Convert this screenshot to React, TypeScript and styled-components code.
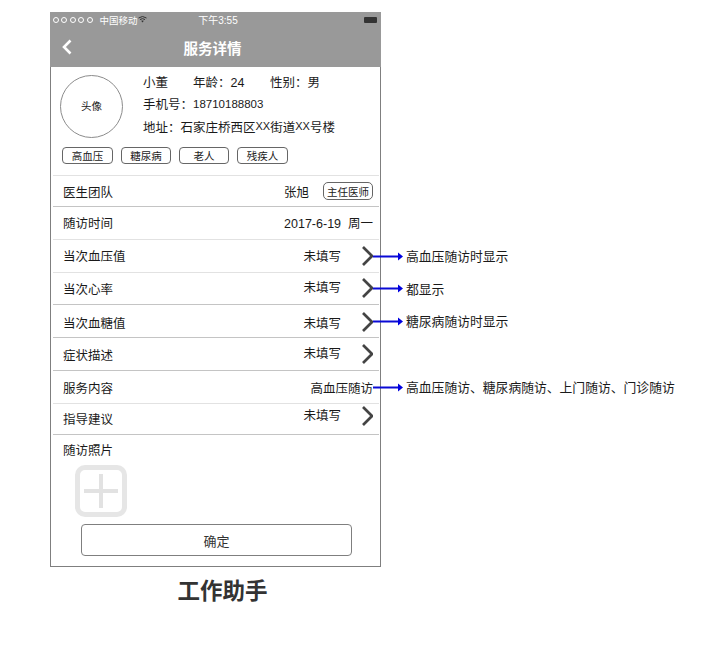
import styled, { createGlobalStyle } from 'styled-components';

const GlobalStyle = createGlobalStyle`
    body {
        margin: 0;
        background: #fff;
        font-family: "Liberation Sans", "Noto Sans CJK SC", sans-serif;
        color: #1a1a1a;
    }
`;

const Page = styled.div`
    width: 704px;
    height: 647px;
    padding: 12px 0 0 50px;
    box-sizing: border-box;
    overflow: hidden;
`;

const Phone = styled.div`
    width: 331px;
    height: 555px;
    box-sizing: border-box;
    border: 1px solid #7f7f7f;
    border-top: 0;
    display: flex;
    flex-direction: column;
`;

const Header = styled.div`
    background: #999;
    height: 55px;
    margin: 0 -1px;
    flex: none;
    color: #fff;
`;

const StatusBar = styled.div`
    height: 15px;
    padding: 0 4px 0 3px;
    display: grid;
    grid-template-columns: 1fr auto 1fr;
    align-items: center;
    font-size: 10px;
`;

const StatusLeft = styled.div`
    display: flex;
    align-items: center;
`;

const Dots = styled.div`
    display: flex;
    gap: 2.4px;
    margin-right: 7px;
`;

const Dot = styled.span`
    width: 4px;
    height: 4px;
    border: 0.8px solid #fff;
    border-radius: 50%;
`;

const Carrier = styled.span`
    color: #fff;
    font-size: 9.5px;
    white-space: nowrap;
`;

const Clock = styled.span`
    margin-left: 6px;
`;

const Battery = styled.div`
    justify-self: end;
    width: 13px;
    height: 6px;
    background: #333;
    border-radius: 1px;
`;

const NavBar = styled.div`
    height: 40px;
    padding: 0 11px;
    display: flex;
    align-items: center;
`;

const NavTitle = styled.div`
    flex: 1;
    padding-right: 18px;
    text-align: center;
    font-size: 14.5px;
    font-weight: 700;
`;

const Profile = styled.div`
    height: 108px;
    flex: none;
    box-sizing: border-box;
    padding: 8px 0 0 9px;
`;

const ProfileTop = styled.div`
    display: flex;
    gap: 20px;
`;

const Avatar = styled.div`
    width: 63px;
    height: 63px;
    padding-bottom: 2px;
    box-sizing: border-box;
    border: 1px solid #8c8c8c;
    border-radius: 50%;
    display: flex;
    align-items: center;
    justify-content: center;
    font-size: 10.5px;
`;

const Info = styled.div`
    display: flex;
    flex-direction: column;
    margin-top: -5px;
`;

const InfoLine = styled.div`
    display: flex;
    height: 22.5px;
    align-items: center;
    font-size: 12.5px;
    white-space: nowrap;
`;

const InfoCell = styled.span<{ $width?: number }>`
    width: ${p => (p.$width ? `${p.$width}px` : 'auto')};
`;

const Narrow = styled.span<{ $size: number }>`
    font-size: ${p => p.$size}px;
`;

const Tags = styled.div`
    display: flex;
    gap: 8px;
    margin: 9px 0 0 2px;
`;

const Tag = styled.span<{ $width: number }>`
    width: ${p => p.$width}px;
    height: 17px;
    box-sizing: border-box;
    border: 1px solid #666;
    border-radius: 4px;
    display: flex;
    align-items: center;
    justify-content: center;
    font-size: 10.5px;
`;

const Row = styled.div<{ $height: number; $strong?: boolean; $drop?: number }>`
    height: ${p => p.$height}px;
    flex: none;
    box-sizing: border-box;
    margin: 0 1px 0 2px;
    padding: ${p => p.$drop ?? 0}px 6px 1px 10px;
    border-top: 1px solid ${p => (p.$strong ? '#c4c4c4' : '#e2e2e2')};
    display: flex;
    align-items: center;
    position: relative;
    font-size: 12.5px;
`;

const RowLabel = styled.span`
    flex: 1;
`;

const RowValue = styled.span<{ $lift?: number }>`
    padding-bottom: ${p => p.$lift ?? 0}px;
    white-space: pre;
`;

const DoctorTag = styled.span`
    width: 50px;
    height: 18px;
    margin-left: 14px;
    box-sizing: border-box;
    border: 1px solid #666;
    border-radius: 5px;
    display: flex;
    align-items: center;
    justify-content: center;
    font-size: 10.5px;
`;

const Chevron = styled.svg<{ $lift?: number }>`
    width: 12px;
    height: 20px;
    margin-left: 20px;
    margin-bottom: ${p => p.$lift ?? 0}px;
    flex: none;
`;

const Note = styled.div`
    position: absolute;
    left: 320px;
    top: 50%;
    transform: translateY(-50%);
    display: flex;
    align-items: center;
    gap: 3px;
    white-space: nowrap;
    font-size: 12.8px;
`;

const NoteText = styled.span`
    margin-bottom: 2px;
`;

const Photos = styled.div`
    flex: 1;
    margin: 0 1px 0 2px;
    padding: 5px 0 0 10px;
    border-top: 1px solid #c4c4c4;
    font-size: 12.5px;
`;

const AddPhoto = styled.div`
    width: 52px;
    height: 52px;
    margin: 6px 0 0 12px;
    box-sizing: border-box;
    border: 5px solid #e6e6e6;
    border-radius: 10px;
    position: relative;
    &::before,
    &::after {
        content: '';
        position: absolute;
        background: #e2e2e2;
    }
    &::before {
        left: 4px;
        right: 4px;
        top: 19px;
        height: 4px;
    }
    &::after {
        top: 4px;
        bottom: 4px;
        left: 19px;
        width: 4px;
    }
`;

const Confirm = styled.button`
    display: block;
    width: 271px;
    height: 32px;
    margin: 7px 0 0 18px;
    padding: 0;
    background: #fff;
    border: 1px solid #7f7f7f;
    border-radius: 4px;
    color: #333;
    font-family: inherit;
    font-size: 13px;
`;

const Caption = styled.div`
    width: 331px;
    padding: 6px 0 0 14px;
    box-sizing: border-box;
    text-align: center;
    font-size: 22.5px;
    font-weight: 700;
    color: #333;
`;

const ChevronIcon = ({ lift }: { lift?: number }) => (
    <Chevron viewBox="0 0 12 20" $lift={lift}>
        <path d="M2 1 L11 10 L2 19" fill="none" stroke="#444" strokeWidth="2.7" />
    </Chevron>
);

const Arrow = () => (
    <svg width="30" height="10" viewBox="0 0 30 10">
        <path d="M0 5 H26" stroke="#0a0ad6" strokeWidth="2" />
        <path d="M25 1 L30 5 L25 9 Z" fill="#0000e0" />
    </svg>
);

const Annotation = ({ text }: { text: string }) => (
    <Note>
        <Arrow />
        <NoteText>{text}</NoteText>
    </Note>
);

const tags = [
    { name: '高血压', width: 51 },
    { name: '糖尿病', width: 50 },
    { name: '老人', width: 50 },
    { name: '残疾人', width: 51 }
];

export default function App() {
    return (
        <Page>
            <GlobalStyle />
            <Phone>
                <Header>
                    <StatusBar>
                        <StatusLeft>
                            <Dots>
                                {[0, 1, 2, 3, 4].map(i => (
                                    <Dot key={i} />
                                ))}
                            </Dots>
                            <Carrier>中国移动</Carrier>
                            <svg width="9" height="7" viewBox="0 0 9 7">
                                <path d="M0.5 2 Q4.5 -1 8.5 2 M2 3.6 Q4.5 1.6 7 3.6" fill="none" stroke="#333" strokeWidth="1" />
                                <path d="M3.2 4.8 L4.5 6.5 L5.8 4.8 Q4.5 4 3.2 4.8 Z" fill="#333" />
                            </svg>
                        </StatusLeft>
                        <Clock>下午3:55</Clock>
                        <Battery />
                    </StatusBar>
                    <NavBar>
                        <svg width="12" height="16" viewBox="0 0 12 16">
                            <path d="M9.5 1.5 L3 8 L9.5 14.5" fill="none" stroke="#fff" strokeWidth="2.6" />
                        </svg>
                        <NavTitle>服务详情</NavTitle>
                    </NavBar>
                </Header>
                <Profile>
                    <ProfileTop>
                        <Avatar>头像</Avatar>
                        <Info>
                            <InfoLine>
                                <InfoCell $width={50}>小董</InfoCell>
                                <InfoCell $width={77}>年龄：24</InfoCell>
                                <InfoCell>性别：男</InfoCell>
                            </InfoLine>
                            <InfoLine>
                                手机号：<Narrow $size={11.5}>18710188803</Narrow>
                            </InfoLine>
                            <InfoLine>
                                地址：石家庄桥西区<Narrow $size={11}>XX</Narrow>街道<Narrow $size={11}>XX</Narrow>号楼
                            </InfoLine>
                        </Info>
                    </ProfileTop>
                    <Tags>
                        {tags.map(tag => (
                            <Tag key={tag.name} $width={tag.width}>
                                {tag.name}
                            </Tag>
                        ))}
                    </Tags>
                </Profile>
                <Row $height={31} $drop={1}>
                    <RowLabel>医生团队</RowLabel>
                    <RowValue>张旭</RowValue>
                    <DoctorTag>主任医师</DoctorTag>
                </Row>
                <Row $height={33} $strong>
                    <RowLabel>随访时间</RowLabel>
                    <RowValue>2017-6-19  周一</RowValue>
                </Row>
                <Row $height={33}>
                    <RowLabel>当次血压值</RowLabel>
                    <RowValue>未填写</RowValue>
                    <ChevronIcon />
                    <Annotation text="高血压随访时显示" />
                </Row>
                <Row $height={32}>
                    <RowLabel>当次心率</RowLabel>
                    <RowValue $lift={3}>未填写</RowValue>
                    <ChevronIcon />
                    <Annotation text="都显示" />
                </Row>
                <Row $height={33} $strong $drop={3}>
                    <RowLabel>当次血糖值</RowLabel>
                    <RowValue>未填写</RowValue>
                    <ChevronIcon />
                    <Annotation text="糖尿病随访时显示" />
                </Row>
                <Row $height={33} $strong $drop={1}>
                    <RowLabel>症状描述</RowLabel>
                    <RowValue $lift={4}>未填写</RowValue>
                    <ChevronIcon />
                </Row>
                <Row $height={33} $strong $drop={1}>
                    <RowLabel>服务内容</RowLabel>
                    <RowValue>高血压随访</RowValue>
                    <Annotation text="高血压随访、糖尿病随访、上门随访、门诊随访" />
                </Row>
                <Row $height={31}>
                    <RowLabel>指导建议</RowLabel>
                    <RowValue $lift={8}>未填写</RowValue>
                    <ChevronIcon lift={5} />
                </Row>
                <Photos>
                    随访照片
                    <AddPhoto />
                    <Confirm>确定</Confirm>
                </Photos>
            </Phone>
            <Caption>工作助手</Caption>
        </Page>
    );
}
